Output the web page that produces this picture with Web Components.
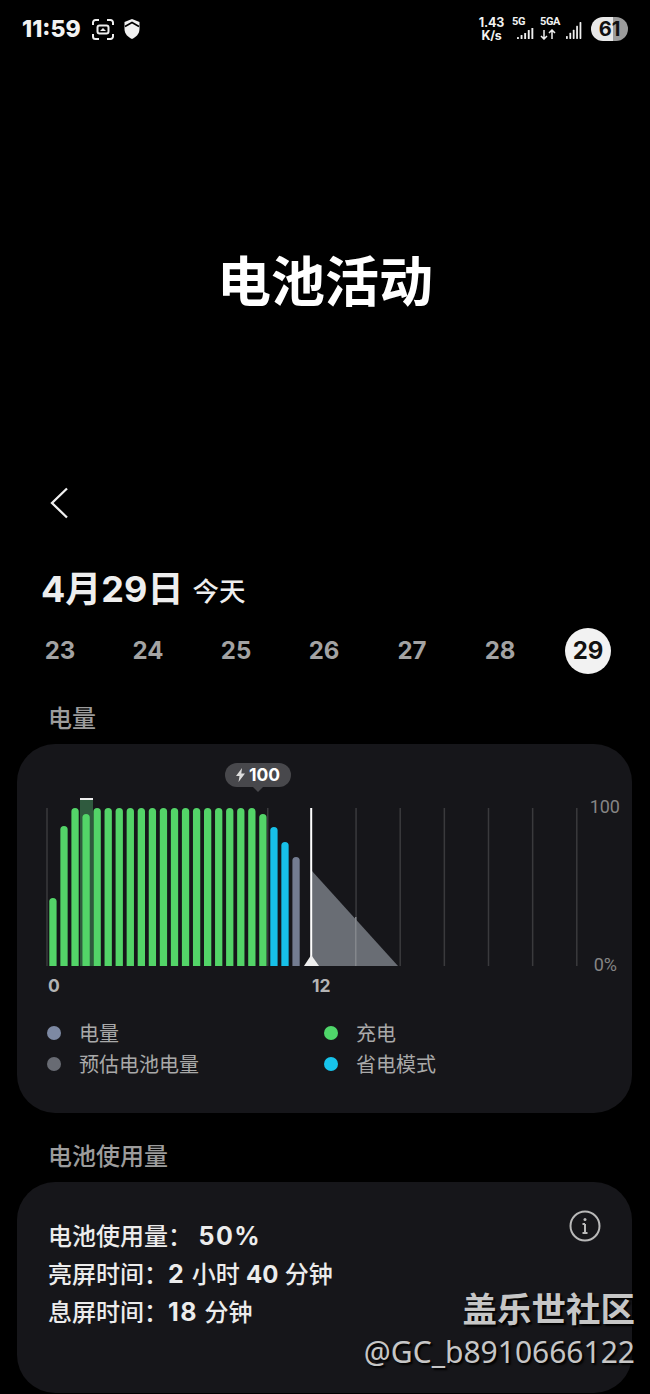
<!DOCTYPE html>
<html lang="zh"><head><meta charset="utf-8"><title>电池活动</title>
<style>
html,body{margin:0;background:#000;}
body{width:650px;height:1394px;overflow:hidden;position:relative;font-family:Roboto,"Noto Sans CJK SC",sans-serif;color:#eee;}
battery-app{display:block}
</style></head><body>
<battery-app>
  <status-bar></status-bar>
  <hero-title>电池活动</hero-title>
  <back-nav></back-nav>
  <date-head></date-head>
  <date-strip></date-strip>
  <section-label>电量</section-label>
  <battery-card></battery-card>
  <section-label style="margin-top:26px">电池使用量</section-label>
  <usage-card></usage-card>
</battery-app>
<water-mark></water-mark>
<script>
const F='Inter,"Noto Sans CJK SC",sans-serif';
const R='Roboto,"Noto Sans CJK SC",sans-serif';
function el(name,html){customElements.define(name,class extends HTMLElement{connectedCallback(){if(!this.shadowRoot){this.attachShadow({mode:'open'}).innerHTML=html;}}});}
const sig=(h)=>[0,1,2,3,4].map(i=>{const v=h[i];return `<rect x="${i*3.6}" y="${11-v}" width="1.9" height="${v}" rx=".5" fill="#eee"/>`}).join('');

el('status-bar',`<style>
:host{display:flex;height:58px;align-items:center;justify-content:space-between;padding:0 22px 0 22px;box-sizing:border-box;color:#f2f2f2;font-family:${F}}
.l,.r{display:flex;align-items:center}
.t{font:800 23px/1 ${F};width:70px;white-space:nowrap}
.sp{font:700 12.500px/13px ${F};text-align:center;width:27px;margin-right:7px;letter-spacing:-.2px}
.cell{display:grid;grid-template-rows:10px 12px;height:22px}
.cell span{font:700 11px/10px ${R};margin-top:-1px;white-space:nowrap;letter-spacing:-.4px}
.pill{width:37px;height:24px;border-radius:12px;background:linear-gradient(90deg,#e8e8e8 0 22px,#9b9b9b 22px);color:#111;font:700 20px/24px ${F};text-align:center;margin-left:9px}
</style>
<div class="l"><span class="t">11:59</span>
<svg width="22" height="21" viewBox="0 0 22 21" fill="none" stroke="#eee" stroke-width="2" style="margin-right:10px"><path d="M1 6V3.500A2.500 2.500 0 0 1 3.500 1H7M15 1h3.500A2.500 2.500 0 0 1 21 3.500V6M21 15v2.500a2.500 2.500 0 0 1-2.500 2.500H15M7 20H3.500A2.500 2.500 0 0 1 1 17.500V15"/><rect x="5.500" y="6.500" width="11" height="8" rx="2"/><path d="M8 12l3-3 3 3z" fill="#eee" stroke="none"/></svg>
<svg width="16" height="20" viewBox="0 0 16 20"><path d="M8 0l7.500 3V10c0 5-3.500 8-7.500 10C4 18 .5 15 .5 10V3z" fill="#f2f2f2"/><path d="M1 7.500 8 3.500l7 4" fill="none" stroke="#000" stroke-width="1.600"/></svg></div>
<div class="r"><div class="sp">1.43<br>K/s</div>
<div class="cell" style="width:22px;margin-right:6px"><span>5G</span><svg width="17" height="11" viewBox="0 0 17 11" style="margin:0 0 0 5px">${sig([2,4,6,9,11])}</svg></div>
<div class="cell" style="width:17px;margin-right:9px"><span>5GA</span><svg width="17" height="11" viewBox="0 0 17 11" fill="none" stroke="#eee" stroke-width="1.500" style="margin-top:1px"><path d="M4 1v9M1 7l3 3 3-3M12 10V1M9 4l3-3 3 3"/></svg></div>
<svg width="16" height="17" viewBox="0 0 17 11" preserveAspectRatio="none" style="margin-top:3px">${sig([2,4,6,8.500,11])}</svg>
<div class="pill">61</div></div>`);

el('hero-title',`<style>:host{display:block;height:412px;box-sizing:border-box;padding-top:190px;text-align:center;font:700 54px/70px ${F};color:#fff}</style><slot></slot>`);

el('back-nav',`<style>:host{display:flex;height:66px;align-items:center;padding-left:50px}svg{display:block}</style>
<svg width="20" height="32" viewBox="0 0 20 32" fill="none" stroke="#f0f0f0" stroke-width="2.300"><path d="M17 1.500 2 16l15 14.500"/></svg>`);

el('date-head',`<style>:host{display:flex;align-items:flex-start;gap:9px;height:54px;margin-top:26px;padding-left:41px;box-sizing:border-box;color:#eee}
b{font:700 36px/54px ${F}}span{font:500 26.500px/54px ${F};margin-top:2px}</style><b>4月29日</b><span>今天</span>`);

el('date-strip',`<style>:host{display:grid;grid-template-columns:repeat(7,88px);height:46px;margin:12px 0 0 16px;align-items:center;justify-items:center;font:700 24px/46px ${F};color:#a3a3a3}
.on{width:46px;height:46px;border-radius:50%;background:#f2f2f2;color:#111;text-align:center}</style>
<span>23</span><span>24</span><span>25</span><span>26</span><span>27</span><span>28</span><span class="on">29</span>`);

el('section-label',`<style>:host{display:block;height:43px;margin-top:27px;padding-left:48px;font:500 24px/36px ${F};color:#9c9c9c}</style><slot></slot>`);
</script>
<script>
customElements.define('battery-card',class extends HTMLElement{connectedCallback(){
const L=17,T=744;
const tops=[898,826,808,814];for(let i=4;i<19;i++)tops.push(808);tops.push(814,827,842,857);
let bars='';tops.forEach((t,i)=>{const x=49.300+i*11.050-L;const c=i<20?'#53d468':i<22?'#17c0e8':'#737c91';
 bars+=`<path d="M${x} ${966-T}V${t-T+3.600}a3.650 3.650 0 0 1 7.300 0V${966-T}z" fill="${c}"/>`;});
let ticks='';for(let k=0;k<=12;k++){const x=47+k*44.150-L;if(k==6)continue;if(k>0&&k<5)continue;
 ticks+=`<rect x="${x-.75}" y="${808-T}" width="1.500" height="158" fill="#3a3a3d"/>`;}
this.attachShadow({mode:'open'}).innerHTML=`<style>
:host{display:block;height:369px;margin:0 18px 0 17px;border-radius:38px;background:#16161a;box-sizing:border-box;font-family:${F}}
.chart{position:relative;height:275px}
svg{position:absolute;left:0;top:0}
.tip{position:absolute;left:208px;top:19px;width:66px;height:24px;border-radius:12px;background:#48484c;color:#fff;display:flex;align-items:center;justify-content:center;gap:4px;font:700 17.500px/24px ${F}}
.tip:after{content:"";position:absolute;left:28px;bottom:-5px;border:5px solid transparent;border-bottom:0;border-top-color:#48484c}
.a{position:absolute;line-height:20px}
.h{font:700 17.500px/20px ${F};color:#b4b4b4}
.y{font:400 18px/20px ${R};color:#858585;text-align:right}
.leg{display:grid;grid-template-columns:277px 1fr;grid-auto-rows:31px;padding-left:30px;font:400 20px/31px ${F};color:#a9a9a9}
.i{display:flex;align-items:center;gap:18px}
.i i{width:14px;height:14px;border-radius:50%;flex:none;margin-top:-4px}
</style>
<div class="chart">
<svg width="615" height="275" viewBox="0 0 615 275">
${ticks}
<rect x="63" y="55" width="13" height="167" fill="#2f5a3e"/>
<rect x="63" y="54" width="13" height="2" fill="#eee"/>
${bars}
<path d="M295 127 381 222H295z" fill="#696d74"/>
<rect x="338" y="173" width="1.500" height="49" fill="#84878c"/>
<rect x="293.200" y="64" width="2" height="158" fill="#fff"/>
<path d="M287 222 294.200 211 302 222z" fill="#eee"/>
</svg>
<div class="tip"><svg style="position:static" width="9" height="14" viewBox="0 0 9 14"><path d="M6 0 0 8h3.500L2.500 14 9 5.500H5.300z" fill="#ddd"/></svg><span>100</span></div>
<span class="a h" style="left:31px;top:232px">0</span>
<span class="a h" style="left:295px;top:232px">12</span>
<span class="a y" style="right:12px;top:53px">100</span>
<span class="a y" style="right:15px;top:211px">0%</span>
</div>
<div class="leg">
<div class="i"><i style="background:#7d89a3"></i><span>电量</span></div><div class="i"><i style="background:#4fd66a"></i><span>充电</span></div>
<div class="i"><i style="background:#686b73"></i><span>预估电池电量</span></div><div class="i"><i style="background:#17c4ec"></i><span>省电模式</span></div>
</div>`;
}});
el('usage-card',`<style>
:host{display:flex;height:211px;margin:0 18px 0 17px;border-radius:38px;background:#16161a;box-sizing:border-box;padding:36px 31px 0 31px;justify-content:space-between;align-items:flex-start;font-family:${F}}
.l{font:500 24px/38px ${F};color:#ececec}
.l>div{height:38px}
b{font-weight:700;letter-spacing:1.500px;font-size:25px;line-height:1}
b.n{letter-spacing:0;font-size:24px}
svg{display:block;margin-top:-8px}
</style>
<div class="l"><div>电池使用量： <b>50%</b></div><div>亮屏时间：<b>2</b> 小时 <b class="n">40</b> 分钟</div><div>息屏时间：<b>18</b> 分钟</div></div>
<svg width="32" height="32" viewBox="0 0 32 32" fill="none" stroke="#b9b9b9" stroke-width="2"><circle cx="16" cy="16" r="14.500"/><path d="M16 14v9M13.500 14H16M13.500 23h5"/><circle cx="16" cy="9.500" r="1.500" fill="#b9b9b9" stroke="none"/></svg>`);
el('water-mark',`<style>:host{position:absolute;right:15px;top:1284px;text-align:right;color:#c6c6c6;text-shadow:2px 2px 2px #000;white-space:nowrap}
.a{font:700 34.500px/46px "Noto Sans CJK SC",sans-serif}
.b{font:400 30px/44px "Noto Sans","Open Sans",sans-serif}</style><div class="a">盖乐世社区</div><div class="b">@GC_b8910666122</div>`);
</script>
</body></html>
